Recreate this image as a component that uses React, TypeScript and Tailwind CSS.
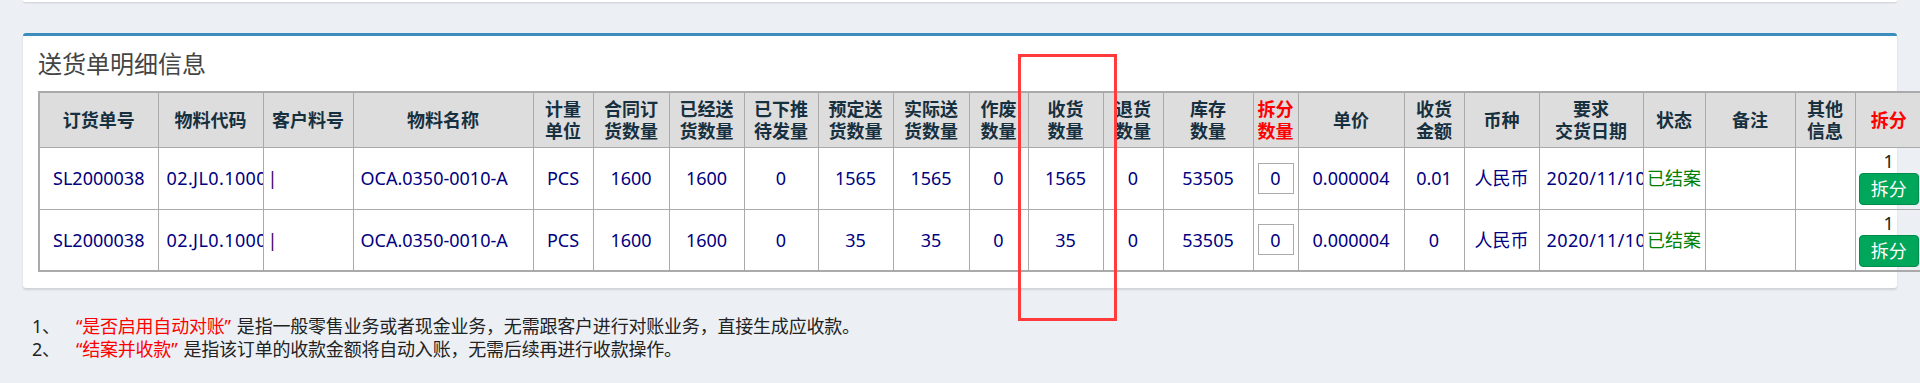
import type { ReactNode } from "react"

const headers: { lines: string[]; red?: boolean }[] = [
    { lines: ["订货单号"] },
    { lines: ["物料代码"] },
    { lines: ["客户料号"] },
    { lines: ["物料名称"] },
    { lines: ["计量", "单位"] },
    { lines: ["合同订", "货数量"] },
    { lines: ["已经送", "货数量"] },
    { lines: ["已下推", "待发量"] },
    { lines: ["预定送", "货数量"] },
    { lines: ["实际送", "货数量"] },
    { lines: ["作废", "数量"] },
    { lines: ["收货", "数量"] },
    { lines: ["退货", "数量"] },
    { lines: ["库存", "数量"] },
    { lines: ["拆分", "数量"], red: true },
    { lines: ["单价"] },
    { lines: ["收货", "金额"] },
    { lines: ["币种"] },
    { lines: ["要求", "交货日期"] },
    { lines: ["状态"] },
    { lines: ["备注"] },
    { lines: ["其他", "信息"] },
    { lines: ["拆分"], red: true },
]

const rows = [
    { planned: "1565", actual: "1565", received: "1565", amount: "0.01" },
    { planned: "35", actual: "35", received: "35", amount: "0" },
]

const Td = ({ children, className = "" }: { children?: ReactNode; className?: string }) => (
    <td className={`h-[62px] border border-[#aaaaaa] text-center align-middle text-[#000080] ${className}`}>
        {children}
    </td>
)

const App = () => {
    return (
        <div className="relative w-[1920px] h-[383px] overflow-hidden bg-[#ecf0f5] font-['Noto_Sans','Noto_Sans_CJK_SC',sans-serif]">
            {/* bottom edge of the box above */}
            <div className="mx-[23px] h-[2px] rounded-b-[3px] bg-white shadow-[0_1px_2px_rgba(0,0,0,0.15)]" />

            <div className="mx-[23px] mt-[31px] rounded-[3px] border-t-[3px] border-[#3c8dbc] bg-white pl-[15px] pb-[16px] shadow-[0_2px_2px_rgba(0,0,0,0.12)]">
                <div className="pt-[10px] text-[24px] leading-[36px] text-[#444444]">送货单明细信息</div>

                <table className="mt-[9px] w-[1884px] table-fixed border-collapse border-2 border-[#aaaaaa] text-[18px] leading-[22px]">
                    <colgroup>
                        <col className="w-[119px]" />
                        <col className="w-[105px]" />
                        <col className="w-[90px]" />
                        <col className="w-[180px]" />
                        <col className="w-[60px]" />
                        <col className="w-[76px]" />
                        <col className="w-[75px]" />
                        <col className="w-[74px]" />
                        <col className="w-[75px]" />
                        <col className="w-[76px]" />
                        <col className="w-[59px]" />
                        <col className="w-[75px]" />
                        <col className="w-[60px]" />
                        <col className="w-[90px]" />
                        <col className="w-[45px]" />
                        <col className="w-[106px]" />
                        <col className="w-[60px]" />
                        <col className="w-[75px]" />
                        <col className="w-[104px]" />
                        <col className="w-[62px]" />
                        <col className="w-[90px]" />
                        <col className="w-[60px]" />
                        <col className="w-[68px]" />
                    </colgroup>
                    <thead>
                        <tr className="bg-[#dddddd]">
                            {headers.map((h, i) => (
                                <th
                                    key={i}
                                    className={`h-[55px] border border-[#aaaaaa] px-[1px] text-center align-middle font-bold ${h.red ? "text-[#ff0000]" : "text-[#17303f]"}`}
                                >
                                    {h.lines.map((line, j) => (
                                        <div key={j} className="whitespace-nowrap">{line}</div>
                                    ))}
                                </th>
                            ))}
                        </tr>
                    </thead>
                    <tbody>
                        {rows.map((r, i) => (
                            <tr key={i}>
                                <Td className="text-[#1b2d3c]">SL2000038</Td>
                                <Td className="text-left">
                                    <div className="overflow-hidden whitespace-nowrap pl-[8px] pr-[2px] tracking-[0.4px]">02.JL0.10001</div>
                                </Td>
                                <Td className="text-left">
                                    <span className="pl-[4px] text-[#400060]">|</span>
                                </Td>
                                <Td className="text-left">
                                    <span className="pl-[7px]">OCA.0350-0010-A</span>
                                </Td>
                                <Td>PCS</Td>
                                <Td>1600</Td>
                                <Td>1600</Td>
                                <Td>0</Td>
                                <Td>{r.planned}</Td>
                                <Td>{r.actual}</Td>
                                <Td>0</Td>
                                <Td>{r.received}</Td>
                                <Td>0</Td>
                                <Td>53505</Td>
                                <Td>
                                    <div className="mx-auto flex h-[31px] w-[36px] items-center justify-center border border-[#aaaaaa]">0</div>
                                </Td>
                                <Td>0.000004</Td>
                                <Td>{r.amount}</Td>
                                <Td>人民币</Td>
                                <Td className="text-left">
                                    <div className="overflow-hidden whitespace-nowrap pl-[7px] pr-[4px] tracking-[0.4px]">2020/11/10</div>
                                </Td>
                                <Td className="text-[#008000]">已结案</Td>
                                <Td />
                                <Td />
                                <Td>
                                    <div className="flex flex-col items-center">
                                        <span className="leading-[20px] text-[#222222]">1</span>
                                        <button className="mt-[2px] h-[32px] w-[60px] rounded-[4px] border border-[#008d4c] bg-[#00a65a] text-[18px] leading-[20px] text-white">
                                            拆分
                                        </button>
                                    </div>
                                </Td>
                            </tr>
                        ))}
                    </tbody>
                </table>
            </div>

            <div className="mt-[27px] pl-[32px] text-[18px] leading-[23px] tracking-[-0.2px] text-[#222222]">
                <p>
                    1、<span className="pl-[16px] pr-[6px] text-[#ff0000]">“是否启用自动对账”</span>是指一般零售业务或者现金业务，无需跟客户进行对账业务，直接生成应收款。
                </p>
                <p>
                    2、<span className="pl-[16px] pr-[6px] text-[#ff0000]">“结案并收款”</span>是指该订单的收款金额将自动入账，无需后续再进行收款操作。
                </p>
            </div>

            {/* annotation box */}
            <div className="absolute left-[1018px] top-[54px] h-[267px] w-[99px] border-[3px] border-[#ff3b3b]" />
        </div>
    )
}

export default App
